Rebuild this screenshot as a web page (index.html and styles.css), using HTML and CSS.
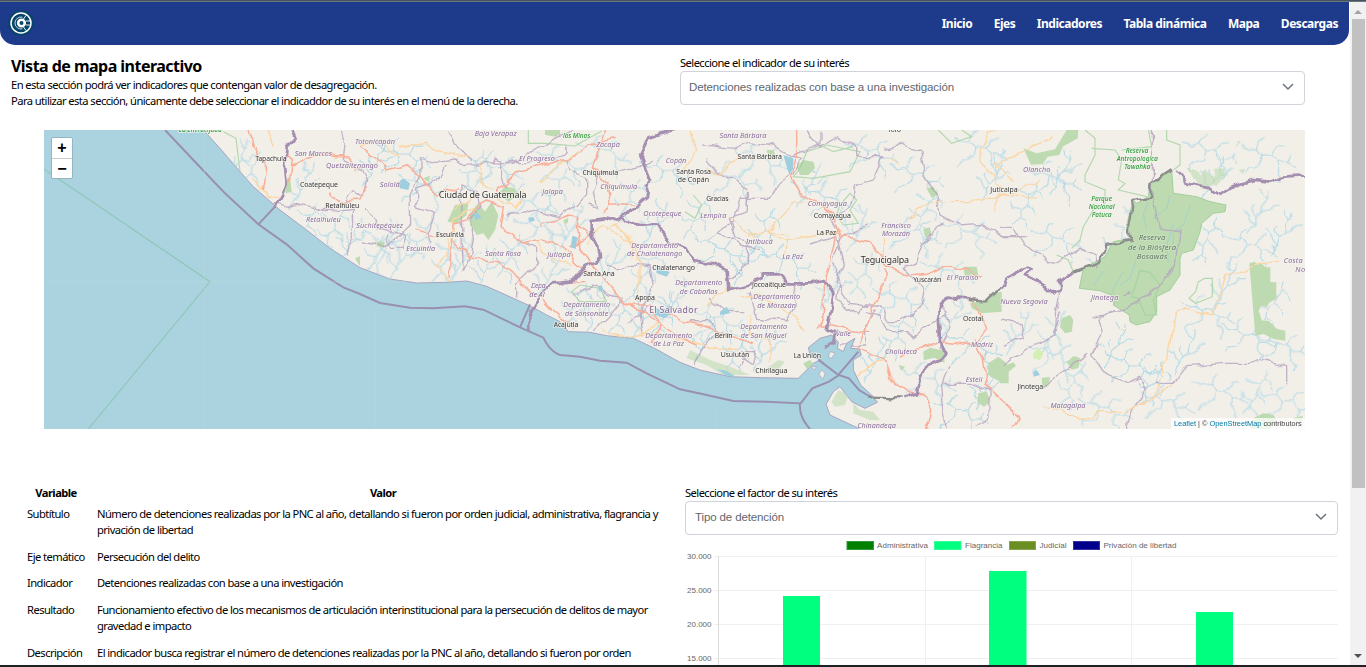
FILE: index.html
```html
<!DOCTYPE html>
<html lang="es">
<head>
<meta charset="utf-8">
<title>Vista de mapa interactivo</title>
<link rel="stylesheet" href="styles.css">
</head>
<body>
<div class="strip-top"></div>
<div class="window">
<div class="page">
  <header class="navbar">
    <svg class="logo" viewBox="0 0 26 26" width="26" height="26">
      <circle cx="13" cy="13" r="12.8" fill="#05456b"/>
      <circle cx="13" cy="13" r="10" fill="none" stroke="#fff" stroke-width="1.5"/>
      <path d="M14.500 7.200A6 6 0 1 0 14.500 18.800" fill="none" stroke="#fff" stroke-width=".8"/>
      <circle cx="13.500" cy="13" r="3.300" fill="none" stroke="#fff" stroke-width="2.600"/>
      <path d="M15.500 9l2.500-3.500M18 11h4M18 15h4M15.500 17l2.500 3.500" stroke="#fff" stroke-width=".9"/>
    </svg>
    <nav class="links"><a>Inicio</a><a>Ejes</a><a>Indicadores</a><a>Tabla dinámica</a><a>Mapa</a><a>Descargas</a></nav>
  </header>

  <section class="intro">
    <div class="intro-text">
      <h1>Vista de mapa interactivo</h1>
      <p>En esta sección podrá ver indicadores que contengan valor de desagregación.</p>
      <p>Para utilizar esta sección, únicamente debe seleccionar el indicaddor de su interés en el menú de la derecha.</p>
    </div>
    <div class="field">
      <label>Seleccione el indicador de su interés</label>
      <div class="select"><span>Detenciones realizadas con base a una investigación</span>
        <svg width="12" height="8" viewBox="0 0 12 8"><path d="M1 1l5 5 5-5" fill="none" stroke="#6c757d" stroke-width="1.5"/></svg></div>
    </div>
  </section>

  <div class="map">
    <svg class="tiles" viewBox="12 15 3783 897" width="1261" height="299">
      <defs>
        <path id="land" d="M460 -20L490 15 540 70 600 140 640 185 720 255 800 315 870 370 960 428 1050 462 1130 474 1220 472 1280 468 1340 484 1420 520 1475 545 1520 570 1560 590 1585 620 1650 622 1700 632 1780 640 1840 668 1920 712 1980 735 2070 755 2160 758 2275 760 2290 745 2320 715 2342 704 2312 695 2305 668 2340 640 2375 630 2395 652 2392 670 2410 680 2420 655 2445 640 2432 670 2458 672 2464 690 2440 705 2440 735 2462 780 2500 815 2512 832 2475 850 2435 830 2400 785 2380 800 2358 838 2370 870 2460 912 2480 940H3840V-20Z"/>
        <clipPath id="land-clip"><use href="#land"/></clipPath>
        <filter id="wiggle" x="0" y="0" width="3800" height="920" filterUnits="userSpaceOnUse">
          <feTurbulence type="fractalNoise" baseFrequency=".03" numOctaves="1" seed="4" result="noise"/>
          <feDisplacementMap in="SourceGraphic" in2="noise" scale="28" xChannelSelector="R" yChannelSelector="G"/>
        </filter>
        <path id="river-a" d="M0 150l8-18 14-12 6-24 16-14 4-22 15-18 3-24M22 120l-14-16-6-22-14-8M44 82l20-4 14-16 18-2M63 44l-18-12-4-20M28 96l-10-20 3-16"/>
        <path id="river-b" d="M0 10l22 14 26-4 20 16 30 2 16 20 28 2 24 16M48 20l8-20 16-10M68 36l-6 26-20 12M98 38l14-22 22-4M114 58l-2 24 14 18-4 22M40 74l-16 2-10 18M142 60l10-18"/>
        <path id="river-c" d="M70 0l-6 24-18 14-2 28-20 16-4 26-20 20M64 24l20 12 6 22M46 38l-22-6-12-16M44 66l20 14 2 24M24 82l-20-6-10-16M20 108l18 12 2 20"/>
      </defs>
      <rect x="12" y="15" width="3783" height="897" fill="#aad3df"/>
      <use href="#land" fill="#f2efe9" stroke="#a9a5c1" stroke-width="3"/>
      <g clip-path="url(#land-clip)">
        <g class="water-lines" filter="url(#wiggle)">
          <use href="#river-a" x="560" y="30"/><use href="#river-c" x="590" y="80"/><use href="#river-a" x="750" y="100"/><use href="#river-c" x="760" y="235"/><use href="#river-c" x="840" y="250"/><use href="#river-a" x="900" y="260"/>
          <use href="#river-a" x="970" y="30"/><use href="#river-b" x="1010" y="50"/><use href="#river-c" x="980" y="310"/><use href="#river-a" x="1050" y="310"/><use href="#river-c" x="1110" y="270"/><use href="#river-a" x="1010" y="270"/><use href="#river-c" x="1180" y="340"/><use href="#river-a" x="1230" y="320"/>
          <use href="#river-b" x="1070" y="140"/><use href="#river-c" x="1260" y="70"/><use href="#river-b" x="1290" y="90"/><use href="#river-b" x="1380" y="190"/><use href="#river-b" x="1420" y="270"/><use href="#river-a" x="1300" y="350"/><use href="#river-c" x="1370" y="330"/><use href="#river-a" x="1490" y="370"/>
          <use href="#river-b" x="1490" y="70"/><use href="#river-c" x="1510" y="130"/><use href="#river-a" x="1560" y="220"/><use href="#river-b" x="1610" y="40"/><use href="#river-c" x="1730" y="160"/><use href="#river-b" x="1800" y="100"/><use href="#river-a" x="1810" y="210"/><use href="#river-a" x="1680" y="330"/><use href="#river-c" x="1780" y="370"/>
          <use href="#river-c" x="1570" y="470"/><use href="#river-a" x="1630" y="480"/><use href="#river-c" x="1710" y="490"/><use href="#river-a" x="1780" y="490"/><use href="#river-c" x="1830" y="500"/><use href="#river-a" x="1870" y="440"/><use href="#river-b" x="1950" y="540"/><use href="#river-a" x="1960" y="560"/><use href="#river-c" x="2060" y="600"/><use href="#river-a" x="2140" y="590"/>
          <use href="#river-b" x="2000" y="120"/><use href="#river-b" x="2080" y="60"/><use href="#river-c" x="1930" y="210"/><use href="#river-b" x="1960" y="330"/><use href="#river-a" x="2080" y="330"/><use href="#river-c" x="2130" y="250"/><use href="#river-b" x="2160" y="370"/><use href="#river-a" x="2270" y="100"/><use href="#river-b" x="2290" y="180"/>
          <use href="#river-b" x="2410" y="40"/><use href="#river-a" x="2420" y="230"/><use href="#river-b" x="2550" y="110"/><use href="#river-c" x="2620" y="190"/><use href="#river-b" x="2540" y="280"/><use href="#river-a" x="2340" y="410"/><use href="#river-c" x="2430" y="380"/><use href="#river-b" x="2500" y="480"/><use href="#river-b" x="2640" y="400"/><use href="#river-c" x="2530" y="570"/><use href="#river-a" x="2470" y="620"/><use href="#river-b" x="2580" y="720"/><use href="#river-a" x="2700" y="500"/>
          <use href="#river-b" x="2740" y="30"/><use href="#river-a" x="2820" y="80"/><use href="#river-b" x="2700" y="280"/><use href="#river-c" x="2920" y="170"/><use href="#river-b" x="2960" y="120"/><use href="#river-a" x="3030" y="60"/><use href="#river-b" x="2970" y="300"/><use href="#river-a" x="3150" y="330"/><use href="#river-c" x="3230" y="230"/><use href="#river-a" x="3330" y="220"/><use href="#river-b" x="3220" y="420"/>
          <use href="#river-b" x="2720" y="620"/><use href="#river-a" x="2800" y="710"/><use href="#river-b" x="2680" y="820"/><use href="#river-a" x="2900" y="540"/><use href="#river-c" x="3000" y="560"/><use href="#river-b" x="2960" y="650"/><use href="#river-c" x="3060" y="710"/><use href="#river-b" x="3110" y="810"/><use href="#river-a" x="3190" y="580"/><use href="#river-b" x="3200" y="680"/><use href="#river-c" x="3300" y="710"/>
          <use href="#river-b" x="3430" y="40"/><use href="#river-a" x="3490" y="70"/><use href="#river-b" x="3600" y="50"/><use href="#river-a" x="3620" y="180"/><use href="#river-c" x="3460" y="280"/><use href="#river-b" x="3550" y="320"/><use href="#river-a" x="3520" y="400"/><use href="#river-b" x="3420" y="520"/><use href="#river-b" x="3540" y="590"/><use href="#river-c" x="3660" y="470"/><use href="#river-b" x="3640" y="620"/><use href="#river-a" x="3400" y="600"/><use href="#river-b" x="3460" y="760"/><use href="#river-c" x="3610" y="740"/><use href="#river-b" x="3660" y="790"/><use href="#river-b" x="3300" y="790"/><use href="#river-a" x="3690" y="240"/>
        </g>

        <g class="wood">
          <path d="M735 165l15-10 5 45-18 5zM1515 15h45v12l-15 8-30-6zM1245 240l40-5-5 35-30 25-28-5zM1290 265l25-30 20 25 20-30 20 40-10 45-20 30-15-20-20 5-20-30zM1375 205l20-20 30 5 10 20-30 20zM1010 350l25 0-5 18-20-4zM1150 160l20-8-4 20zM945 400l15-6v30zM1570 285l15-5-2 14-10 2z"/>
          <path d="M2270 125l20-20 30 5 5 20-20 20-25 0zM2180 75l20 0 8 20-20 10zM2660 190l20-5 15 25-20 8zM2650 312l20-5 5 25-20 4zM2770 425l40 0 5 25-40 5zM2790 535l50-10 20-20 25-5v60l-60 5-30-15zM2650 680l20-12 45 10-2 35-30-15-32 8zM2575 720l20 5-10 12zM2815 805l25-5 12 30-20 15-20-15zM2845 715l30-20 25 20 0 60-30-10-25-15zM2290 715l20-10 15 15-25 12z"/>
          <path d="M1940 700l60 20 50 30 80 0-60-25-60-20-60-30zM2165 740l50-35 20 5-30 35zM2375 830l20-35 30 15-10 30-30 5zM2440 835l20 20 40 5 20 25-30 0-50-20z" opacity=".6"/>
          <path d="M2950 70l40 15 55-12 35-58h35l-2 25-45 25-10 25-35 5-15 22-35 2zM3065 580l25-10 10 15-5 35-20 5-15-20zM3080 712l20-18 20 5-5 30-20 5zM3005 758l25-2-3 25-20 10zM2880 700l20 20 20-8 8 10-22 18v35h-26zM3640 880l30-15 30 5 10 15-20 27h-60zM3760 878l28-5v20l-25-5z"/>
          <path d="M3628 415l15-5 10 10 8-8 15 15 15 0 0 45h18v50l-20 10-10 15-15-5-8 15 10 30 20 0 25 25 25 5v30l-35-5-30-15-25 5z"/>
          <path filter="url(#wiggle)" d="M3440 125l20 5 20 25 15-20 20 20 10-25 25 5 4 25-20 20-20-5-10 20-20-5-15-25-15-10zM3585 55l10 0-5 12zM3595 135l18-4-8 20z" opacity=".6"/>
          <path class="reserve" d="M3395 136L3370 150 3330 180 3325 215 3290 235 3280 225 3260 300 3275 340 3220 350 3195 395 3130 430 3118 490 3180 497 3225 515 3220 540 3268 570 3270 590 3288 600 3330 590 3350 560 3350 515 3390 495 3420 450 3420 400 3425 385 3460 375 3480 320 3485 295 3520 265 3555 260 3558 240 3510 230 3470 215 3400 205Z"/>
          <path class="park" d="M3300 437l30 5 30 38-20 45 10 45h-35l-20-50-20-5z"/>
          <path d="M2980 685l15-15 15 15-10 20-20-5z" fill="#d3efb3"/>
        </g>
        <g class="rivers-over"><path d="M3325 230l-15 40 10 40M3390 210l-10 40-40 30M3400 300l-20 60 5 50M3250 440l-30 50 0 30M3190 440l-30 40M3290 400l-20 60-30 20M3450 240l-20 60-30 20 0 40"/></g>
        <g class="park">
          <path d="M485 15l30 35 85 95M550 20l38 20 12 100M1465 15v40l50 0 90 8 80-45M2340 60l40 20 60-15M2260 155l60 5 110-20 30-60-100-20-60 20-20 50zM2400 240l30-35 20 20-20 30 25 40-45 5-20-30zM1960 210l25 30-20 40-30-20M3135 15l30 25 0 50-30 60 0 20 60 25 0 40-35 20-30 50-10 40-25 25M3155 70l70 5 20 30-10 60 20 10-20 20 85 20M3325 15l10 50-90 10M3380 15v30l40 15v60l-20 15M3475 470l20-10 22 0v55l-50 20-20-15 20-20zM3050 390l35 15 15 35M1620 480l60 10 20 40-80 0-25-30zM2695 15l40 40 60-20-30-20"/>
        </g>

        <g class="borders" filter="url(#wiggle)">
          <path d="M905 20l10 35-5 50 50 20 20 40-10 40M1140 100l20 12 90-10 30 20 80-12 5-10 20 5 0 60 10 18M1140 100l0 50-30 60 2 90-50 45-30 20-70-15M1225 15l30 55 20 20 20 20M1220 120l-30 50-60 20 0 55 60 20-30 60 20 30M1360 110l60 5 60-40 60-35 60-25M1400 110l100 0 60-15 25-30M1580 100l10 35 50 20 0 50-30 35-60 35-60-20-90 15M1640 240l30 10-10-50 20-60 60 0 60-15 40-20M1440 350l50 20 0 45-60 60 0 45M1270 440l20-40 10-60-10-60 30-30-10-50-50-20zM700 235l40 10 30-10 80 20 60-15 30-45 30 20M820 240l40 20 80-10 0 60-20 85M975 250l40 60 80 20-10 40-30 0-10-40"/>
          <path d="M1700 420l30 15 40-15 60 5 10 60-30 40-10 50-40 20M1600 510l60-30 50 30 30 10M1660 620l60-60 30-40M1810 630l-10-60 20-30M1990 60l90 10 50-20 70 10 50 30 40 10-30 50-40 20-30 50-90 0-20 70-50 30 70 40 60 10M2000 100l30 40 60 30 35 25M2125 200l0 60-60 20 20 60 40 10 0 70-60 40M2250 90l90-30 0-40M2300 15l40 50 50-30 60 30 0 30 80 0-30 70-50 20-20 60-60 40 25 30M2130 500l20 80 90 10 30-50-10-60M1950 590l60 0 20 30-50 60-20 40M2010 520l50 40 50 0M2090 690l20-10 40 0-10 40-30-20-10 20"/>
          <path d="M2530 70l60-10 50 20 10 70 40 60 10 60 60 30 60-5 70 40 70 0M2710 290l-60 60-20 60-40 20 60 60-10 60-60 40-30 0-30-50-40 0-30 30-60-50 10-60-20-50 20-70 80-40M2310 360l80-25 20 80-20 60 40 60 60 10M2480 560l40 10 20 50 60 0 20 20 60-50 50-20M2400 660l80 0 0-60 30-50M2700 540l20 20 10 50-30 60M2730 720l-25 60 10 130M2710 775l80 0 60 20 0 80-40 30"/>
          <path d="M2880 310l40 0 30 50 60 30 20 30 90-50 50 20 0 40M2880 585l60 10 10 40-60 30M3060 500l-10 60-5 70-80 40-80 50M3040 625l20-60M3270 500l-20 10M3220 555l-40 25 10 50-35 60 30 50 80 35 40-15 15 40-40 50-20 50 20 50M3005 790l80-60 60-40M3340 775l60 0 40-50 120-10 70 0 30-10 80 20 0 50M3337 15v200l20 90 60 10-10 100-20 40-100 80-80 30-50 10"/>
        </g>

        <g class="roads secondary" filter="url(#wiggle)">
          <path d="M640 160l40 50 40 10M680 15l20 50M1320 110l0 60 40 25M1080 70l70-15 70 30 70 15M960 60l60-15 60 50M1225 345l-5 50-30 20 40 60M1240 350l0-70 60-30M1450 200l-20 50-60-30M1500 170l80-70 30-20M1240 250l60-30M1700 320l30-20 40 40 10 60M1640 360l40-60 100 50 20 60 0 60-20 60M1600 420l-80-30-30-40M1690 610l60 30 60-10 60-50M1800 620l160 30 50 20 90 0M2000 540l60-50 50 0M2190 710l0-60-60-20 0-60"/>
          <path d="M2120 330l60-10 60 30 40-10 60-15 60-5M2065 275l60 50 20 10M2240 380l10-50-70-10M2530 410l0-70M2600 280l80-50 90 0 120-20 100 10M2890 0l-40 20-30 60 0 30 30 30 30 50-20 70M2180 320l60-60 20-30 60 0M2100 90l-60 60-40-20M1950 15l20 60-40 60M2100 520l60-10 100 60 40 50M3000 165l-80 40-40-20M2920 165l-60-50 60-20 120-60M3720 415l-70 0-50 30-40 10-20 55-20 60-90-20-20 15-20 100-50 150-30 20M3400 780l-140 80-80 0-60 30-60-40-50-5M2460 760l20-40 60-20M2540 100l40 20"/>
        </g>
        <g class="roads" filter="url(#wiggle)">
          <path d="M630 15l10 50 40 70-10 60M730 80l30 20-5 60-20 25M755 130l70-45 60 10 40 0 30 40M870 200l30 30 60-5 20-40M960 65l40 30 40 40 60-15 40 30 50 60 60-20M1130 310l40 20 60 5 10-40 40-10 40-50 20-10 50 20-10 60 70 50 60-10 60 20 40 50 50 40M1235 340l-8 120M1235 340l60 60 80 10 60 50 20 30 50 30 40 40 60 50M1370 200l60-60 80-20 80-20 60-40 80-20M1690 15l-10 50-20 60 40 50 10 60-20 30M1710 240l70 0M1500 300l90-30 60 60-60 40M1610 280l10 90 60 80 60 70M1580 470l60 0M1740 520l30 20 60 0 30 60-30 60M1740 520l80 50 90 60 60 30M1880 560l50 30 60 10 90 40 60 20"/>
          <path d="M2270 15v80l-15 60 25 50 60 30 40 40 20 60 40 5 50 10 50 70 60 30 60-5 70-25 90 30M2390 310l-20 110-20 60 0 100-15 30M2335 600l40 0 60 15 60 5M2535 430l0 40-30 60-25 80-30 60 80 30 20 60 60 40 50 10 15 50-20 60M2580 690l60-20 70-20 60 10 40-10 30-40-20-50-30-40M2800 640l30 60 10 80 40 40 60 60-20 30"/>
        </g>
        <g class="lakes"><path d="M1070 175l20-15 20 15-5 20-25-5zM1300 265l15 0 10 15-20 5zM1465 280l15-5 5 12-15 4zM1845 420l20 15 25 5-10 15-30-10zM2230 90l30 10 0 30-12 20-8-25zM1675 485l10-5 5 15-12 6zM1845 545l20 15 25-20 5 20-20 20-30-10zM1597 332l15 5-5 35-15-5zM2980 740l10-5 10 15-20 5zM2040 560l20-15 10 20-30 5zM2030 732l30 5 30 20-30-5z"/></g>
      </g>

      <g class="sea-borders">
        <path d="M375 15L460 105 555 205 655 298 740 358 820 430 910 487 960 507 1020 534 1110 548 1180 550 1240 546 1275 544 1330 554 1440 607 1510 638Q1530 680 1560 690L1620 695 1680 707 1760 713 1820 745 1920 793 1990 808 2080 828 2180 830 2280 835Q2276 875 2310 912M655 298L705 245M1440 607L1470 538"/>
        <path d="M2282 835l35-45 50-20 30-20 30 10 30 35 40 24M2335 704l60 46 60-70"/>
      </g>
      <g class="country" filter="url(#wiggle)">
        <path d="M755 15l10 22-25 28-5 60 5 50-20 50-20 20M1900 15l-75 25-25 50 30 75-10 50-65 55-25 20-35-10-40 5 0 40 20 40 5 35-60 40-25 30-60 5-35 40-25 40-10 30 0 30M1740 280l60 20 50-5 20 30 20 30 50 15 20 35 60 10 40 20 5 60 60-15 40-20 0-15 50 0 30 30 70 0 30-10 35 35-5 50-15 60 25 10-5 35-25 10"/>
        <path d="M2590 820l40-15 25-80 50-20 15-15-20-40-5-100 20-35 70 5M2880 490l20-30 60-35 15 5-15 20 50 25 30 30 20-5 0-30 40-30M3410 135l30 40 70 15 30 20 30-20 40-15 30-10 50 5 40-15 85-5"/>
        <path class="gray" d="M3100 440l80-30 20-50 70-15-5-50 15-70 50-10 5-40 60-40M2490 818l95 2M2780 525l60 5 40-40"/>
      </g>
      <g fill="#f2efe9" stroke="#a9a5c1" stroke-width="2"><path d="M2345 735l10 10-6 18-12-15zM2370 680l15 4-10 16-10-5zM2330 725l-8 10-8-10z"/></g>
      <path class="marine" d="M12 132L510 470 145 912"/>
      <path d="M12 471H1100M493 15V912M1005 550V912M1517 690V912M2029 850V912" stroke="#b8d7d8" stroke-width="1.5" fill="none"/>

      <g class="labels city">
        <text x="693" y="109" textLength="94">Tapachula</text><text x="837" y="185" textLength="114">Coatepeque</text><text x="907" y="248" textLength="102">Retalhuleu</text>
        <text x="1230" y="336" textLength="84">Escuintla</text><text x="1681" y="149" textLength="107">Chiquimula</text><text x="1677" y="453" textLength="94">Santa Ana</text><text x="1578" y="606" textLength="74">Acajutla</text><text x="1815" y="525" textLength="60">Apopa</text><text x="1901" y="436" textLength="128">Chalatenango</text>
        <text x="2159" y="103" textLength="133">Santa Bárbara</text><text x="1961" y="147" textLength="104">Santa Rosa</text><text x="1960" y="171" textLength="94">de Copán</text><text x="2032" y="229" textLength="67">Gracias</text><text x="2377" y="280" textLength="111">Comayagua</text><text x="2359" y="329" textLength="59">La Paz</text><text x="2187" y="487" textLength="102">Jocoaitique</text><text x="2051" y="638" textLength="54">Berlín</text><text x="2085" y="697" textLength="86">Usulután</text><text x="2302" y="699" textLength="82">La Unión</text><text x="2194" y="743" textLength="96">Chirilagua</text><text x="2662" y="472" textLength="84">Yuscarán</text><text x="2799" y="588" textLength="60">Ocotal</text><text x="2892" y="200" textLength="82">Juticalpa</text><text x="2563" y="21" textLength="40">Yoro</text><text x="2971" y="793" textLength="77">Jinotega</text>
      </g>
      <g class="labels capital"><text x="1328" y="219" textLength="263">Ciudad de Guatemala</text><text x="2535" y="414" textLength="145">Tegucigalpa</text></g>
      <text class="labels nation" x="1900" y="563" textLength="145">El Salvador</text>
      <g class="labels region">
        <text x="820" y="92" textLength="112">San Marcos</text><text x="936" y="129" textLength="156">Quetzaltenango</text><text x="1005" y="58" textLength="120">Totonicapán</text><text x="850" y="292" textLength="104">Retalhuleu</text><text x="1019" y="309" textLength="140">Suchitepéquez</text><text x="1049" y="186" textLength="60">Sololá</text><text x="1142" y="378" textLength="87">Escuintla</text><text x="1367" y="33" textLength="126">Baja Verapaz</text><text x="1491" y="108" textLength="108">El Progreso</text><text x="1704" y="67" textLength="71">Zacapa</text><text x="1736" y="191" textLength="111">Chiquimula</text><text x="1538" y="208" textLength="62">Jalapa</text><text x="1389" y="394" textLength="108">Santa Rosa</text><text x="1557" y="397" textLength="70">Jutiapa</text><text x="1495" y="489" textLength="44">Depa</text><text x="1491" y="515" textLength="46">de Al</text>
        <text x="1640" y="545" textLength="141">Departamento</text><text x="1640" y="572" textLength="130">de Sonsonate</text><text x="1844" y="368" textLength="141">Departamento</text><text x="1844" y="394" textLength="166">de Chalatenango</text><text x="1908" y="113" textLength="62">Copán</text><text x="1867" y="272" textLength="115">Ocotepeque</text><text x="1886" y="638" textLength="141">Departamento</text><text x="1886" y="664" textLength="92">de La Paz</text><text x="1976" y="481" textLength="141">Departamento</text><text x="1976" y="507" textLength="114">de Cabañas</text><text x="2109" y="38" textLength="141">Santa Bárbara</text><text x="2020" y="280" textLength="79">Lempira</text><text x="2158" y="356" textLength="80">Intibucá</text><text x="2258" y="402" textLength="63">La Paz</text><text x="2210" y="523" textLength="141">Departamento</text><text x="2210" y="549" textLength="116">de Morazán</text><text x="2171" y="611" textLength="141">Departamento</text><text x="2171" y="638" textLength="137">de San Miguel</text><text x="2362" y="243" textLength="117">Comayagua</text><text x="2568" y="308" textLength="89">Francisco</text><text x="2568" y="334" textLength="84">Morazán</text><text x="2410" y="633" textLength="45">Valle</text><text x="2583" y="687" textLength="96">Choluteca</text><text x="2768" y="465" textLength="95">El Paraíso</text><text x="2510" y="909" textLength="116">Chinandega</text><text x="2826" y="666" textLength="66">Madriz</text><text x="2802" y="770" textLength="50">Estelí</text><text x="2952" y="536" textLength="142">Nueva Segovia</text><text x="2990" y="140" textLength="82">Olancho</text><text x="3194" y="525" textLength="82">Jinotega</text><text x="3084" y="848" textLength="105">Matagalpa</text><text x="3796" y="415" textLength="130">Costa Caribe</text><text x="3796" y="442" textLength="60">Norte</text>
      </g>
      <g class="labels nature"><text x="481" y="22" textLength="130">La Encrucijada</text><text x="1610" y="38" textLength="82">las Minas</text><text x="3291" y="84" textLength="68">Reserva</text><text x="3292" y="108" textLength="124">Antropologica</text><text x="3292" y="132" textLength="78">Tawahka</text><text x="3185" y="229" textLength="62">Parque</text><text x="3185" y="253" textLength="78">Nacional</text><text x="3185" y="277" textLength="60">Patuca</text></g>
      <g class="labels biosphere"><text x="3336" y="346" textLength="80">Reserva</text><text x="3336" y="374" textLength="144">de la Biósfera</text><text x="3336" y="402" textLength="92">Bosawás</text></g>
    </svg>
    <div class="zoom"><span>+</span><span>−</span></div>
    <div class="credit"><a>Leaflet</a> | © <a>OpenStreetMap</a> contributors</div>
  </div>

  <section class="details">
    <table>
      <thead><tr><th>Variable</th><th>Valor</th></tr></thead>
      <tbody>
        <tr><td>Subtítulo</td><td>Número de detenciones realizadas por la PNC al año, detallando si fueron por orden judicial, administrativa, flagrancia y<br>privación de libertad</td></tr>
        <tr><td>Eje temático</td><td>Persecución del delito</td></tr>
        <tr><td>Indicador</td><td>Detenciones realizadas con base a una investigación</td></tr>
        <tr><td>Resultado</td><td>Funcionamiento efectivo de los mecanismos de articulación interinstitucional para la persecución de delitos de mayor<br>gravedad e impacto</td></tr>
        <tr><td>Descripción</td><td>El indicador busca registrar el número de detenciones realizadas por la PNC al año, detallando si fueron por orden</td></tr>
      </tbody>
    </table>
    <div class="factor">
      <label>Seleccione el factor de su interés</label>
      <div class="select"><span>Tipo de detención</span>
        <svg width="12" height="8" viewBox="0 0 12 8"><path d="M1 1l5 5 5-5" fill="none" stroke="#6c757d" stroke-width="1.5"/></svg></div>
      <svg class="chart" viewBox="685 535 653 135" width="653" height="135">
        <path d="M714 556.500H1338M714 590.500H1338M714 624.500H1338M714 658.500H1338M925.500 556V670M1131.500 556V670" stroke="#f0f0f0"/><path d="M718.500 556V670" stroke="#dcdcdc"/>
        <g fill="#00ff7f"><rect x="783" y="596" width="37" height="74"/><rect x="989" y="571" width="37.500" height="99"/><rect x="1196" y="612" width="37" height="58"/></g>
        <g stroke-width="1"><rect x="847" y="541.500" width="26.500" height="8" fill="#008000" stroke="#33993f"/><rect x="934.500" y="541.500" width="26.500" height="8" fill="#00ff7f" stroke="#33ff99"/><rect x="1009.500" y="541.500" width="26" height="8" fill="#6b8e23" stroke="#89a54f"/><rect x="1073.500" y="541.500" width="26" height="8" fill="#00008b" stroke="#3333a2"/></g>
        <g class="chart-text"><text x="877" y="548" textLength="51">Administrativa</text><text x="965" y="548" textLength="37.500">Flagrancia</text><text x="1039.500" y="548" textLength="27">Judicial</text><text x="1103.500" y="548" textLength="73">Privación de libertad</text>
        <text x="687" y="559" textLength="24.500">30.000</text><text x="687" y="593" textLength="24.500">25.000</text><text x="687" y="627" textLength="24.500">20.000</text><text x="687" y="661" textLength="24.500">15.000</text></g>
      </svg>
    </div>
  </section>
</div>
<div class="scrollbar"><i class="up"></i><div class="thumb"></div><i class="down"></i></div>
</div>
<div class="strip-bottom"></div>
</body>
</html>
```
FILE: styles.css
```css
* { box-sizing: border-box; }
body { margin: 0; height: 667px; overflow: hidden; display: flex; flex-direction: column; background: #fff; color: #000; font: 11.2px/16px "Noto Sans", sans-serif; letter-spacing: -.57px; }
svg { letter-spacing: 0; }
.strip-top { height: 2px; flex: none; background: #46545f; border-bottom: 1px solid #65777c; }
.strip-bottom { height: 2px; flex: none; background: #202124; }
.window { flex: 1; min-height: 0; display: flex; }
.page { width: 1350px; flex: none; overflow: hidden; }
.navbar { width: 1349px; height: 43px; padding: 0 11px 0 8px; display: flex; justify-content: space-between; align-items: center; background: #1e3a8a; border-radius: 0 0 15px 15px; }
.logo { margin-top: -1px; }
.links { display: flex; gap: 21.5px; color: #fff; font: bold 12px/16px "Noto Sans", sans-serif; letter-spacing: -.47px; padding-top: 1px; }
.intro { display: flex; height: 85px; padding: 10px 0 0 11px; }
.intro-text { width: 669px; padding-top: 1px; }
h1 { margin: 0 0 1px; font-size: 16px; line-height: 20px; letter-spacing: -.53px; }
p { margin: 0; white-space: nowrap; }
label { display: block; height: 16px; line-height: 15px; }
.field { width: 625px; }
.select { height: 34px; padding: 0 10px 2px 8px; display: flex; align-items: center; justify-content: space-between; border: 1px solid #ced4da; border-radius: 4px; color: #5f666d; font: 11.500px "Liberation Sans", sans-serif; letter-spacing: -.12px; }
.map { position: relative; width: 1261px; height: 299px; margin-left: 44px; overflow: hidden; }
.tiles { display: block; }
.water-lines { fill: none; stroke: #afd8e5; stroke-width: 3.2; opacity: .9; }
.rivers-over { fill: none; stroke: #a6d0c9; stroke-width: 3; }
.wood { fill: #bddab1; }
.reserve { stroke: #9fcf9b; stroke-width: 3; }
.park { fill: none; stroke: #9ed09b; stroke-width: 3.5; opacity: .75; }
.borders { fill: none; stroke: #b5a3bf; stroke-width: 4; opacity: .8; }
.roads { fill: none; stroke: #f9ae98; stroke-width: 4.5; stroke-linejoin: round; }
.roads.secondary { stroke: #fbd6a4; stroke-width: 4; }
.lakes { fill: #9fcfdf; }
.sea-borders { fill: none; stroke: #9990b1; stroke-width: 6; }
.country { fill: none; stroke: #a58fb0; stroke-width: 8; stroke-linejoin: round; }
.country .gray { stroke: #8d8d8d; stroke-width: 7; }
.marine { fill: none; stroke: #8fc7b9; stroke-width: 3.5; }
.labels { font-family: "Noto Sans", sans-serif; text-anchor: middle; paint-order: stroke; stroke: #f5f3ef; stroke-opacity: .75; stroke-width: 5px; stroke-linejoin: round; }
.city { font-size: 21px; fill: #333; }
.capital { font-size: 27px; fill: #333; }
.nation { font-size: 26px; fill: #806094; }
.region { font-size: 22px; font-style: italic; fill: #876b99; }
.nature { font-size: 20px; font-style: italic; font-weight: 600; fill: #3fa44a; }
.biosphere { font-size: 23px; font-style: italic; fill: #5f7461; stroke: #d0e5c8; }
.zoom { position: absolute; left: 7px; top: 7px; width: 22px; height: 42px; background: #fff; border: 1px solid #93b6c1; border-radius: 2px; font: bold 16px/20px "Liberation Sans", sans-serif; letter-spacing: 0; text-align: center; }
.zoom span { display: block; height: 20px; }
.zoom span + span { border-top: 1px solid #ccc; line-height: 19px; }
.credit { position: absolute; right: 0; bottom: 0; width: 134px; height: 11px; padding-left: 3px; background: rgba(255,255,255,.75); color: #444; font: 7.350px/11px "Liberation Sans", sans-serif; letter-spacing: 0; white-space: nowrap; }
.credit a { color: #0078a8; }
.details { display: flex; height: 240px; padding: 56px 0 0 21px; }
table { width: 664px; flex: none; border-collapse: collapse; table-layout: fixed; align-self: flex-start; }
th, td { padding: 5.3px 6px; text-align: left; vertical-align: top; line-height: 16px; white-space: nowrap; }
th { padding: 0 6px; text-align: center; }
th:first-child { width: 70px; }
th:last-child { padding-right: 16px; }
.factor { width: 653px; flex: none; }
.factor .select { padding-left: 9px; }
.chart { display: block; }
.chart-text { font: 8px "Liberation Sans", sans-serif; fill: #666; }
.scrollbar { width: 16px; background: #f1f1f1; display: flex; flex-direction: column; align-items: center; }
.thumb { width: 13px; height: 469px; background: #c1c1c1; }
.up { height: 17px; padding-top: 8px; }
.up::before, .down::before { content: ""; display: block; border: 4px solid transparent; }
.up::before { border-top: 0; border-bottom-color: #a3a3a3; }
.down { margin-top: auto; padding-bottom: 7px; }
.down::before { border-bottom: 0; border-top-color: #505050; }
```
